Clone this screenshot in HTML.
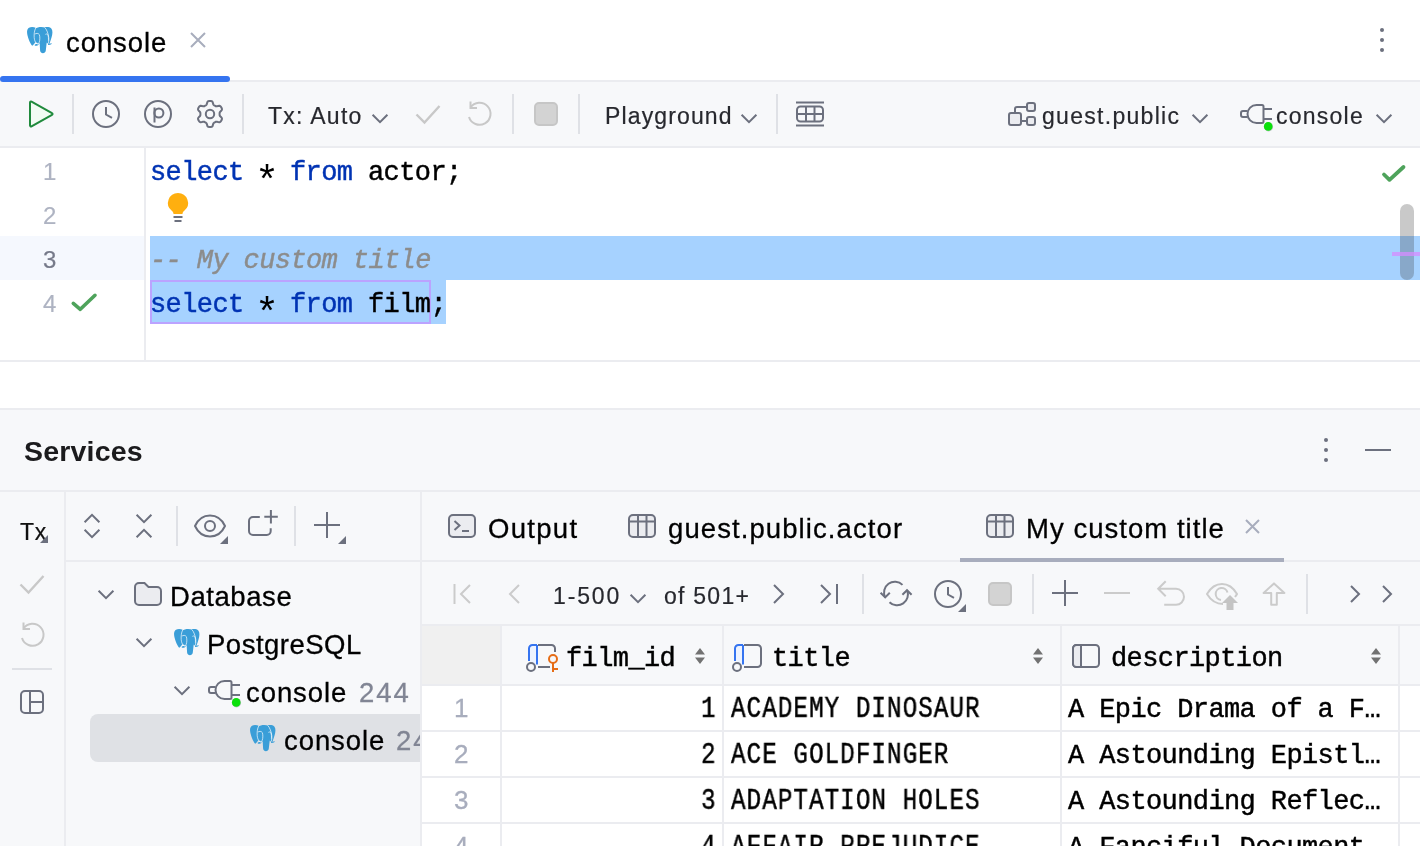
<!DOCTYPE html>
<html><head><meta charset="utf-8"><title>console</title>
<style>
html,body{margin:0;padding:0}
body{width:1420px;height:846px;position:relative;overflow:hidden;background:#fff;font-family:"Liberation Sans",sans-serif}
.r{position:absolute;display:block}
.t{position:absolute;white-space:pre;will-change:transform}
svg{overflow:visible}
</style></head><body>
<div class="r" style="left:0px;top:80px;width:1420px;height:2px;background:#ebecf0;"></div>
<div class="r" style="left:0px;top:82px;width:1420px;height:64px;background:#f7f8fa;"></div>
<div class="r" style="left:0px;top:146px;width:1420px;height:2px;background:#ebecf0;"></div>
<div class="r" style="left:0px;top:76px;width:230px;height:6px;background:#3574f0;border-radius:3px"></div>
<div class="r" style="left:0px;top:236px;width:144px;height:44px;background:#f5f8fe;"></div>
<div class="r" style="left:144px;top:148px;width:2px;height:212px;background:#ebecf0;"></div>
<div class="r" style="left:150px;top:236px;width:1270px;height:44px;background:#a6d2ff;"></div>
<div class="r" style="left:150px;top:280px;width:296px;height:44px;background:#a6d2ff;"></div>
<div class="r" style="left:150px;top:280px;width:281px;height:44px;background:transparent;box-sizing:border-box;border:2px solid #bba3ff"></div>
<div class="r" style="left:0px;top:360px;width:1420px;height:2px;background:#ebecf0;"></div>
<div class="r" style="left:0px;top:408px;width:1420px;height:2px;background:#ebecf0;"></div>
<div class="r" style="left:0px;top:410px;width:1420px;height:436px;background:#f7f8fa;"></div>
<div class="r" style="left:0px;top:490px;width:1420px;height:2px;background:#ebecf0;"></div>
<div class="r" style="left:64px;top:492px;width:2px;height:354px;background:#ebecf0;"></div>
<div class="r" style="left:66px;top:560px;width:1354px;height:2px;background:#ebecf0;"></div>
<div class="r" style="left:420px;top:492px;width:2px;height:354px;background:#ebecf0;"></div>
<svg class="r" style="left:27px;top:27px;" width="26" height="27" viewBox="0 0 26 27" fill="none"><g><path d="M2 .8C.6 1.600-.2 3.600.1 6c.5 4.200 2.600 9.800 5 12.800 1.200-.6 2.400-2 3.200-3.800L9 1C6.800-.1 3.800-.2 2 .800Z" fill="#3a9ed8"/>
<path d="M8.200 1.500C10.500-.3 15.500-.5 18 .500c1.500 1.500 2.200 5.500 2.200 9.500 0 2.500-.2 4.700-.6 6.500-.3 2.300-.5 4.700-.8 7-.4 3.600-5.300 3.700-5.700 0-.2-2.300-.2-4.800-.4-7l-5-1.200C6.800 11 6.800 5 8.200 1.500Z" fill="#3a9ed8"/>
<path d="M17.500.3C19.500-.4 22.800-.3 24.300 1.500c1.700 2 1.300 5.500.2 9-.6 2-1.200 4-2 6l-3-.5Z" fill="#3a9ed8"/>
<path d="M7.800 17.600l3.900-1.400.3 1.200c-1 1.100-2.500 1.600-4.200 1.400ZM20.800 16.200c1.300.5 2.800.5 4.200.1-.6 1.100-1.800 1.800-3.800 1.600Z" fill="#3a9ed8"/>
<path d="M8.800.9C7.300 3.500 7 7 7.200 10.500c.2 2.500.9 4.700 2.400 6 .7.600 1.500.8 2.300.7M7.800 7.200c1.200-1.100 3.600-1.200 4.500.4.700 1.600.7 5.500 0 7.500-.2.700-.6 1.200-1 1.600M17.600.3c2.300 2.300 3.700 6.500 4.200 10.500.2 2 0 3.800-.5 5.300M18.400 7.400c.9-.7 2-.5 2.500.4.500 1.500.7 4 .5 6" stroke="#fff" stroke-width=".8" stroke-opacity=".85" fill="none"/></g></svg>
<div class="t" style="left:66.20px;top:27.00px;font:400 27.5px/32px 'Liberation Sans';color:#000;letter-spacing:0.917px;-webkit-text-stroke:0.3px currentColor;">console</div>
<svg class="r" style="left:190px;top:32px;" width="16" height="16" viewBox="0 0 16 16" fill="none"><path d="M1 1l14 14M15 1L1 15" stroke="#a8adbd" stroke-width="2"/></svg>
<svg class="r" style="left:1378px;top:26px;" width="8" height="28" viewBox="0 0 8 28" fill="none"><circle cx="4" cy="4" r="2" fill="#6c707e"/><circle cx="4" cy="14" r="2" fill="#6c707e"/><circle cx="4" cy="24" r="2" fill="#6c707e"/></svg>
<svg class="r" style="left:28px;top:100px;" width="26" height="28" viewBox="0 0 26 28" fill="none"><path d="M2 2.600v22.800a1 1 0 0 0 1.500.900l20.500-11.400a1 1 0 0 0 0-1.800L3.500 1.700a1 1 0 0 0-1.500.900Z" fill="#f2fcf3" stroke="#208a3c" stroke-width="2" stroke-linejoin="round"/></svg>
<div class="r" style="left:72px;top:94px;width:2px;height:40px;background:#dfe1e6;"></div>
<div class="r" style="left:242px;top:94px;width:2px;height:40px;background:#dfe1e6;"></div>
<div class="r" style="left:512px;top:94px;width:2px;height:40px;background:#dfe1e6;"></div>
<div class="r" style="left:578px;top:94px;width:2px;height:40px;background:#dfe1e6;"></div>
<div class="r" style="left:776px;top:94px;width:2px;height:40px;background:#dfe1e6;"></div>
<svg class="r" style="left:92px;top:100px;" width="28" height="28" viewBox="0 0 28 28" fill="none"><circle cx="14" cy="14" r="13" stroke="#6c707e" stroke-width="2"/><path d="M14 7v7.500l6 3.400" stroke="#6c707e" stroke-width="2"/></svg>
<svg class="r" style="left:144px;top:100px;" width="28" height="28" viewBox="0 0 28 28" fill="none"><circle cx="14" cy="14" r="13" stroke="#6c707e" stroke-width="2"/><path d="M10.500 22.500v-15" stroke="#6c707e" stroke-width="2"/><circle cx="14.900" cy="13" r="4.500" stroke="#6c707e" stroke-width="2"/></svg>
<svg class="r" style="left:196px;top:100px;" width="28" height="28" viewBox="0 0 28 28" fill="none"><path d="M23.60 14.00L23.60 14.63L23.65 15.27L23.98 15.99L24.96 16.94L25.86 18.02L25.98 18.96L25.73 19.78L25.34 20.55L24.87 21.27L24.28 21.89L23.41 22.25L22.03 22.03L20.71 21.65L19.93 21.73L19.35 22.00L18.80 22.31L18.26 22.63L17.73 23.00L17.27 23.64L16.94 24.96L16.44 26.28L15.69 26.85L14.86 27.05L14.00 27.10L13.14 27.05L12.31 26.85L11.56 26.28L11.06 24.96L10.73 23.64L10.27 23.00L9.74 22.63L9.20 22.31L8.65 22.00L8.07 21.73L7.29 21.65L5.97 22.03L4.59 22.25L3.72 21.89L3.13 21.27L2.66 20.55L2.27 19.78L2.02 18.96L2.14 18.02L3.04 16.94L4.02 15.99L4.35 15.27L4.40 14.63L4.40 14.00L4.40 13.37L4.35 12.73L4.02 12.01L3.04 11.06L2.14 9.98L2.02 9.04L2.27 8.22L2.66 7.45L3.13 6.73L3.72 6.11L4.59 5.75L5.97 5.97L7.29 6.35L8.07 6.27L8.65 6.00L9.20 5.69L9.74 5.37L10.27 5.00L10.73 4.36L11.06 3.04L11.56 1.72L12.31 1.15L13.14 0.95L14.00 0.90L14.86 0.95L15.69 1.15L16.44 1.72L16.94 3.04L17.27 4.36L17.73 5.00L18.26 5.37L18.80 5.69L19.35 6.00L19.93 6.27L20.71 6.35L22.03 5.97L23.41 5.75L24.28 6.11L24.87 6.73L25.34 7.45L25.73 8.22L25.98 9.04L25.86 9.98L24.96 11.06L23.98 12.01L23.65 12.73L23.60 13.37Z" stroke="#6c707e" stroke-width="2" stroke-linejoin="round"/><circle cx="14" cy="14" r="4.200" stroke="#6c707e" stroke-width="2"/></svg>
<div class="t" style="left:268.20px;top:100.00px;font:400 23px/32px 'Liberation Sans';color:#27282e;letter-spacing:1.286px;-webkit-text-stroke:0.2px currentColor;">Tx: Auto</div>
<svg class="r" style="left:372px;top:113.5px;" width="16" height="9" viewBox="0 0 16 9" fill="none"><path d="M.600 .800L8 8.200 15.400 .800" stroke="#6c707e" stroke-width="2"/></svg>
<svg class="r" style="left:415px;top:104px;" width="26" height="20" viewBox="0 0 26 20" fill="none"><path d="M1.500 10.500l8 8L24.500 2" stroke="#c8c8c8" stroke-width="2.400"/></svg>
<svg class="r" style="left:467px;top:101px;" width="26" height="26" viewBox="0 0 26 26" fill="none"><path d="M3.500 6.500A11 11 0 1 1 2 16" stroke="#c8c8c8" stroke-width="2"/><path d="M3.500 0.500v6.500h6.500" stroke="#c8c8c8" stroke-width="2"/></svg>
<div class="r" style="left:534px;top:102px;width:24px;height:24px;background:#d3d3d3;box-sizing:border-box;border:2px solid #c6c6c6;border-radius:5px"></div>
<div class="t" style="left:605.00px;top:100.00px;font:400 23px/32px 'Liberation Sans';color:#27282e;letter-spacing:1.133px;-webkit-text-stroke:0.2px currentColor;">Playground</div>
<svg class="r" style="left:740.5px;top:113.5px;" width="16" height="9" viewBox="0 0 16 9" fill="none"><path d="M.600 .800L8 8.200 15.400 .800" stroke="#6c707e" stroke-width="2"/></svg>
<svg class="r" style="left:796px;top:101px;" width="28" height="26" viewBox="0 0 28 26" fill="none"><path d="M0 1.500h28M0 24.500h28" stroke="#6c707e" stroke-width="2"/><rect x="1" y="5.500" width="26" height="15" rx="3.500" stroke="#6c707e" stroke-width="2"/><path d="M1 13h26M10 5.500v15M18.500 5.500v15" stroke="#6c707e" stroke-width="2"/></svg>
<svg class="r" style="left:1008px;top:102px;" width="28" height="24" viewBox="0 0 28 24" fill="none"><rect x="1" y="11" width="12" height="12" rx="2" fill="#ebecf0" stroke="#6c707e" stroke-width="2"/><rect x="19" y="1" width="8" height="8" rx="2" fill="#ebecf0" stroke="#6c707e" stroke-width="2"/><rect x="19" y="15" width="8" height="8" rx="2" fill="#ebecf0" stroke="#6c707e" stroke-width="2"/><path d="M13 19h6M7 11V7a2 2 0 0 1 2-2h10" stroke="#6c707e" stroke-width="2"/></svg>
<div class="t" style="left:1042.20px;top:100.00px;font:400 23px/32px 'Liberation Sans';color:#27282e;letter-spacing:1.291px;-webkit-text-stroke:0.2px currentColor;">guest.public</div>
<svg class="r" style="left:1192px;top:113.5px;" width="16" height="9" viewBox="0 0 16 9" fill="none"><path d="M.600 .800L8 8.200 15.400 .800" stroke="#6c707e" stroke-width="2"/></svg>
<svg class="r" style="left:1240px;top:104px;" width="34" height="28" viewBox="0 0 34 28" fill="none"><path d="M7.500 7H3a2 2 0 0 0-2 2v2a2 2 0 0 0 2 2h4.500M23.500 5H32M23.500 15H32" stroke="#6c707e" stroke-width="2"/><path d="M7.500 10c0-5 4-9 9-9H22a1.500 1.500 0 0 1 1.500 1.500v15A1.500 1.500 0 0 1 22 19h-5.500c-5 0-9-4-9-9Z" stroke="#6c707e" stroke-width="2"/><circle cx="28.500" cy="22.800" r="4.600" fill="#6c707e" opacity=".4"/><circle cx="28.200" cy="22.400" r="4.300" fill="#0be00b"/></svg>
<div class="t" style="left:1276.20px;top:100.00px;font:400 23px/32px 'Liberation Sans';color:#27282e;letter-spacing:1.250px;-webkit-text-stroke:0.2px currentColor;">console</div>
<svg class="r" style="left:1376px;top:113.5px;" width="16" height="9" viewBox="0 0 16 9" fill="none"><path d="M.600 .800L8 8.200 15.400 .800" stroke="#6c707e" stroke-width="2"/></svg>
<div class="t" style="left:42.80px;top:156.00px;font:400 24px/32px 'Liberation Sans';color:#aeb3c2;-webkit-text-stroke:0.2px currentColor;">1</div>
<div class="t" style="left:42.80px;top:200.00px;font:400 24px/32px 'Liberation Sans';color:#aeb3c2;-webkit-text-stroke:0.2px currentColor;">2</div>
<div class="t" style="left:42.80px;top:244.00px;font:400 24px/32px 'Liberation Sans';color:#767a8a;-webkit-text-stroke:0.2px currentColor;">3</div>
<div class="t" style="left:42.80px;top:288.00px;font:400 24px/32px 'Liberation Sans';color:#aeb3c2;-webkit-text-stroke:0.2px currentColor;">4</div>
<div class="t" style="left:149.70px;top:156.80px;font:400 27px/32px 'Liberation Mono';color:#0033b3;letter-spacing:-0.603px;-webkit-text-stroke:0.45px currentColor;">select</div>
<div class="t" style="left:255.00px;top:169.50px;font:400 40px/27px 'Liberation Mono';color:#000;letter-spacing:-0.603px;">*</div>
<div class="t" style="left:290.10px;top:156.80px;font:400 27px/32px 'Liberation Mono';color:#0033b3;letter-spacing:-0.603px;-webkit-text-stroke:0.45px currentColor;">from</div>
<div class="t" style="left:368.10px;top:156.80px;font:400 27px/32px 'Liberation Mono';color:#000;letter-spacing:-0.603px;-webkit-text-stroke:0.45px currentColor;">actor;</div>
<div class="t" style="left:149.70px;top:244.80px;font:italic 400 27px/32px 'Liberation Mono';color:#8c8c8c;letter-spacing:-0.603px;-webkit-text-stroke:0.45px currentColor;">-- My custom title</div>
<div class="t" style="left:149.70px;top:288.80px;font:400 27px/32px 'Liberation Mono';color:#0033b3;letter-spacing:-0.603px;-webkit-text-stroke:0.45px currentColor;">select</div>
<div class="t" style="left:255.00px;top:301.50px;font:400 40px/27px 'Liberation Mono';color:#000;letter-spacing:-0.603px;">*</div>
<div class="t" style="left:290.10px;top:288.80px;font:400 27px/32px 'Liberation Mono';color:#0033b3;letter-spacing:-0.603px;-webkit-text-stroke:0.45px currentColor;">from</div>
<div class="t" style="left:368.10px;top:288.80px;font:400 27px/32px 'Liberation Mono';color:#000;letter-spacing:-0.603px;-webkit-text-stroke:0.45px currentColor;">film;</div>
<svg class="r" style="left:70px;top:292px;" width="28" height="20" viewBox="0 0 28 20" fill="none"><path d="M3.300 11.300l7 6L25 3.300" stroke="#4ea35b" stroke-width="3.600" stroke-linecap="round" stroke-linejoin="round"/></svg>
<svg class="r" style="left:1380px;top:163px;" width="26" height="20" viewBox="0 0 26 20" fill="none"><path d="M4 11.500l5.500 5.300L23.500 4" stroke="#4ea35b" stroke-width="3.800" stroke-linecap="round" stroke-linejoin="round"/></svg>
<svg class="r" style="left:168px;top:193px;" width="20" height="30" viewBox="0 0 20 30" fill="none"><path d="M10 0a10 10 0 0 1 6.500 17.600c-1.300 1.100-2 2.200-2 3.400h-9c0-1.200-.700-2.300-2-3.400A10 10 0 0 1 10 0Z" fill="#ffaf0f"/><path d="M5.500 24h9M6.500 28h7" stroke="#6c707e" stroke-width="2"/></svg>
<div class="r" style="left:1400px;top:204px;width:14px;height:76px;background:rgba(60,60,60,.28);border-radius:7px"></div>
<div class="r" style="left:1392px;top:252px;width:28px;height:4px;background:rgba(214,140,255,.75);"></div>
<div class="t" style="left:24.20px;top:435.30px;font:700 28.5px/32px 'Liberation Sans';color:#1b1b1d;letter-spacing:0.186px;">Services</div>
<svg class="r" style="left:1322px;top:436px;" width="8" height="28" viewBox="0 0 8 28" fill="none"><circle cx="4" cy="4" r="2" fill="#6c707e"/><circle cx="4" cy="14" r="2" fill="#6c707e"/><circle cx="4" cy="24" r="2" fill="#6c707e"/></svg>
<div class="r" style="left:1365px;top:449px;width:26px;height:2px;background:#6c707e;"></div>
<div class="t" style="left:19.50px;top:515.50px;font:400 23px/32px 'Liberation Sans';color:#111;letter-spacing:0.700px;-webkit-text-stroke:0.2px currentColor;">Tx</div>
<svg class="r" style="left:40px;top:535px;" width="8" height="8" viewBox="0 0 8 8" fill="none"><path d="M8 0v8H0Z" fill="#6c707e"/></svg>
<svg class="r" style="left:19px;top:574px;" width="26" height="20" viewBox="0 0 26 20" fill="none"><path d="M1.500 10.500l8 8L24.500 2" stroke="#c8c8c8" stroke-width="2.400"/></svg>
<svg class="r" style="left:20px;top:622px;" width="26" height="26" viewBox="0 0 26 26" fill="none"><path d="M3.500 6.500A11 11 0 1 1 2 16" stroke="#c8c8c8" stroke-width="2"/><path d="M3.500 0.500v6.500h6.500" stroke="#c8c8c8" stroke-width="2"/></svg>
<div class="r" style="left:12px;top:668px;width:40px;height:2px;background:#dfe1e6;"></div>
<svg class="r" style="left:20px;top:690px;" width="24" height="24" viewBox="0 0 24 24" fill="none"><rect x="1" y="1" width="22" height="22" rx="4" stroke="#6c707e" stroke-width="2"/><path d="M10 1v22M10 12h13" stroke="#6c707e" stroke-width="2"/></svg>
<svg class="r" style="left:84px;top:514px;" width="16" height="24" viewBox="0 0 16 24" fill="none"><path d="M.600 8.200L8 .800l7.400 7.400M.600 15.800L8 23.200l7.400-7.400" stroke="#6c707e" stroke-width="2"/></svg>
<svg class="r" style="left:136px;top:514px;" width="16" height="24" viewBox="0 0 16 24" fill="none"><path d="M.600 .800L8 8.200 15.400 .800M.600 23.200L8 15.800l7.400 7.400" stroke="#6c707e" stroke-width="2"/></svg>
<div class="r" style="left:176px;top:506px;width:2px;height:40px;background:#dfe1e6;"></div>
<div class="r" style="left:294px;top:506px;width:2px;height:40px;background:#dfe1e6;"></div>
<svg class="r" style="left:194px;top:514px;" width="34" height="30" viewBox="0 0 34 30" fill="none"><path d="M1 12C4 5.500 9.500 1.500 16 1.500S28 5.500 31 12c-3 6.500-8.500 10.500-15 10.500S4 18.500 1 12Z" stroke="#6c707e" stroke-width="2" stroke-linejoin="round"/><circle cx="16" cy="12" r="5" stroke="#6c707e" stroke-width="2"/><path d="M34 22v8h-8Z" fill="#6c707e"/></svg>
<svg class="r" style="left:248px;top:510px;" width="30" height="27" viewBox="0 0 30 27" fill="none"><path d="M11.800 7H5a4 4 0 0 0-4 4v10a4 4 0 0 0 4 4h13.700a4 4 0 0 0 4-4v-2.700" stroke="#6c707e" stroke-width="2"/><path d="M22.900 0v13.400M16.300 6.800h13.500" stroke="#6c707e" stroke-width="2"/></svg>
<svg class="r" style="left:314px;top:512px;" width="32" height="32" viewBox="0 0 32 32" fill="none"><path d="M13 0v26M0 13h26" stroke="#6c707e" stroke-width="2"/><path d="M32 24v8h-8Z" fill="#6c707e"/></svg>
<svg class="r" style="left:98px;top:589.5px;" width="16" height="9" viewBox="0 0 16 9" fill="none"><path d="M.600 .800L8 8.200 15.400 .800" stroke="#6c707e" stroke-width="2"/></svg>
<svg class="r" style="left:134px;top:582px;" width="28" height="24" viewBox="0 0 28 24" fill="none"><path d="M1 5a4 4 0 0 1 4-4h5.500l4 4H23a4 4 0 0 1 4 4v10a4 4 0 0 1-4 4H5a4 4 0 0 1-4-4Z" fill="#ebecf0" stroke="#6c707e" stroke-width="2"/></svg>
<div class="t" style="left:169.50px;top:580.50px;font:400 27.5px/32px 'Liberation Sans';color:#000;letter-spacing:0.571px;-webkit-text-stroke:0.3px currentColor;">Database</div>
<svg class="r" style="left:136px;top:637.5px;" width="16" height="9" viewBox="0 0 16 9" fill="none"><path d="M.600 .800L8 8.200 15.400 .800" stroke="#6c707e" stroke-width="2"/></svg>
<svg class="r" style="left:173.5px;top:628.5px;" width="26" height="27" viewBox="0 0 26 27" fill="none"><g><path d="M2 .8C.6 1.600-.2 3.600.1 6c.5 4.200 2.600 9.800 5 12.800 1.200-.6 2.400-2 3.200-3.800L9 1C6.800-.1 3.800-.2 2 .800Z" fill="#3a9ed8"/>
<path d="M8.200 1.500C10.500-.3 15.500-.5 18 .500c1.500 1.500 2.200 5.500 2.200 9.500 0 2.500-.2 4.700-.6 6.500-.3 2.300-.5 4.700-.8 7-.4 3.600-5.300 3.700-5.700 0-.2-2.300-.2-4.800-.4-7l-5-1.200C6.800 11 6.800 5 8.200 1.500Z" fill="#3a9ed8"/>
<path d="M17.500.3C19.500-.4 22.800-.3 24.300 1.500c1.700 2 1.300 5.500.2 9-.6 2-1.200 4-2 6l-3-.5Z" fill="#3a9ed8"/>
<path d="M7.800 17.600l3.900-1.400.3 1.200c-1 1.100-2.500 1.600-4.200 1.400ZM20.800 16.200c1.300.5 2.800.5 4.200.1-.6 1.100-1.800 1.800-3.800 1.600Z" fill="#3a9ed8"/>
<path d="M8.800.9C7.300 3.500 7 7 7.200 10.500c.2 2.500.9 4.700 2.400 6 .7.600 1.500.8 2.300.7M7.800 7.200c1.200-1.100 3.600-1.200 4.500.4.700 1.600.7 5.500 0 7.500-.2.700-.6 1.200-1 1.600M17.600.3c2.300 2.300 3.700 6.500 4.200 10.500.2 2 0 3.800-.5 5.300M18.400 7.400c.9-.7 2-.5 2.500.4.500 1.500.7 4 .5 6" stroke="#fff" stroke-width=".8" stroke-opacity=".85" fill="none"/></g></svg>
<div class="t" style="left:207.00px;top:628.50px;font:400 27.5px/32px 'Liberation Sans';color:#000;letter-spacing:0.500px;-webkit-text-stroke:0.3px currentColor;">PostgreSQL</div>
<svg class="r" style="left:174px;top:685.5px;" width="16" height="9" viewBox="0 0 16 9" fill="none"><path d="M.600 .800L8 8.200 15.400 .800" stroke="#6c707e" stroke-width="2"/></svg>
<svg class="r" style="left:208px;top:680px;" width="34" height="28" viewBox="0 0 34 28" fill="none"><path d="M7.500 7H3a2 2 0 0 0-2 2v2a2 2 0 0 0 2 2h4.500M23.500 5H32M23.500 15H32" stroke="#6c707e" stroke-width="2"/><path d="M7.500 10c0-5 4-9 9-9H22a1.500 1.500 0 0 1 1.500 1.500v15A1.500 1.500 0 0 1 22 19h-5.500c-5 0-9-4-9-9Z" stroke="#6c707e" stroke-width="2"/><circle cx="28.500" cy="22.800" r="4.600" fill="#6c707e" opacity=".4"/><circle cx="28.200" cy="22.400" r="4.300" fill="#0be00b"/></svg>
<div class="t" style="left:246.20px;top:676.50px;font:400 27.5px/32px 'Liberation Sans';color:#000;letter-spacing:0.917px;-webkit-text-stroke:0.3px currentColor;">console</div>
<div class="t" style="left:358.70px;top:676.50px;font:400 27.5px/32px 'Liberation Sans';color:#818594;letter-spacing:2.000px;-webkit-text-stroke:0.3px currentColor;">244</div>
<div class="r" style="left:90px;top:714px;width:330px;height:48px;background:#dfe1e5;border-radius:8px 0 0 8px"></div>
<svg class="r" style="left:249.5px;top:725px;" width="26" height="27" viewBox="0 0 26 27" fill="none"><g><path d="M2 .8C.6 1.600-.2 3.600.1 6c.5 4.200 2.600 9.800 5 12.800 1.200-.6 2.400-2 3.200-3.800L9 1C6.800-.1 3.800-.2 2 .800Z" fill="#3a9ed8"/>
<path d="M8.200 1.500C10.500-.3 15.500-.5 18 .500c1.500 1.500 2.200 5.500 2.200 9.500 0 2.500-.2 4.700-.6 6.500-.3 2.300-.5 4.700-.8 7-.4 3.600-5.300 3.700-5.700 0-.2-2.300-.2-4.800-.4-7l-5-1.200C6.800 11 6.800 5 8.200 1.500Z" fill="#3a9ed8"/>
<path d="M17.500.3C19.500-.4 22.800-.3 24.300 1.500c1.700 2 1.300 5.500.2 9-.6 2-1.200 4-2 6l-3-.5Z" fill="#3a9ed8"/>
<path d="M7.800 17.600l3.900-1.400.3 1.200c-1 1.100-2.500 1.600-4.200 1.400ZM20.800 16.200c1.300.5 2.800.5 4.200.1-.6 1.100-1.800 1.800-3.800 1.600Z" fill="#3a9ed8"/>
<path d="M8.800.9C7.300 3.500 7 7 7.200 10.500c.2 2.500.9 4.700 2.400 6 .7.600 1.500.8 2.300.7M7.800 7.200c1.200-1.100 3.600-1.200 4.500.4.700 1.600.7 5.500 0 7.500-.2.700-.6 1.200-1 1.600M17.600.3c2.300 2.300 3.700 6.500 4.200 10.500.2 2 0 3.800-.5 5.300M18.400 7.400c.9-.7 2-.5 2.500.4.500 1.500.7 4 .5 6" stroke="#fff" stroke-width=".8" stroke-opacity=".85" fill="none"/></g></svg>
<div class="t" style="left:284.20px;top:724.50px;font:400 27.5px/32px 'Liberation Sans';color:#000;letter-spacing:0.917px;-webkit-text-stroke:0.3px currentColor;">console</div>
<div class="r" style="left:390px;top:714px;width:30px;height:48px;overflow:hidden">
<div class="t" style="left:6.20px;top:10.50px;font:400 27.5px/32px 'Liberation Sans';color:#818594;letter-spacing:2.000px;-webkit-text-stroke:0.3px currentColor;">244</div>
</div>
<svg class="r" style="left:448px;top:514px;" width="28" height="24" viewBox="0 0 28 24" fill="none"><rect x="1" y="1" width="26" height="22" rx="4" fill="#ebecf0" stroke="#6c707e" stroke-width="2"/><path d="M6.500 7l5 4.500-5 4.500M14 17h7" stroke="#6c707e" stroke-width="2"/></svg>
<div class="t" style="left:488.20px;top:513.00px;font:400 27.5px/32px 'Liberation Sans';color:#000;letter-spacing:1.300px;-webkit-text-stroke:0.3px currentColor;">Output</div>
<svg class="r" style="left:628px;top:514px;" width="28" height="24" viewBox="0 0 28 24" fill="none"><rect x="1" y="1" width="26" height="22" rx="4" fill="#ebecf0" stroke="#6c707e" stroke-width="2"/><path d="M1 7.500h26M10 1v22M18.500 1v22" stroke="#6c707e" stroke-width="2"/></svg>
<div class="t" style="left:668.20px;top:513.00px;font:400 27.5px/32px 'Liberation Sans';color:#000;letter-spacing:1.088px;-webkit-text-stroke:0.3px currentColor;">guest.public.actor</div>
<svg class="r" style="left:986px;top:514px;" width="28" height="24" viewBox="0 0 28 24" fill="none"><rect x="1" y="1" width="26" height="22" rx="4" fill="#ebecf0" stroke="#6c707e" stroke-width="2"/><path d="M1 7.500h26M10 1v22M18.500 1v22" stroke="#6c707e" stroke-width="2"/></svg>
<div class="t" style="left:1026.00px;top:513.00px;font:400 27.5px/32px 'Liberation Sans';color:#000;letter-spacing:1.036px;-webkit-text-stroke:0.3px currentColor;">My custom title</div>
<svg class="r" style="left:1244.5px;top:518.5px;" width="15" height="15" viewBox="0 0 15 15" fill="none"><path d="M1 1l13 13M14 1L1 14" stroke="#a8adbd" stroke-width="2"/></svg>
<div class="r" style="left:960px;top:558px;width:324px;height:4px;background:#a8adbd;"></div>
<svg class="r" style="left:453px;top:584px;" width="18" height="20" viewBox="0 0 18 20" fill="none"><path d="M1.500 0v20M17 1L8 10l9 9" stroke="#cbcbcb" stroke-width="2"/></svg>
<svg class="r" style="left:507px;top:584px;" width="14" height="20" viewBox="0 0 14 20" fill="none"><path d="M12 1L3 10l9 9" stroke="#cbcbcb" stroke-width="2"/></svg>
<div class="t" style="left:553.20px;top:579.50px;font:400 23px/32px 'Liberation Sans';color:#27282e;letter-spacing:1.875px;-webkit-text-stroke:0.2px currentColor;">1-500</div>
<svg class="r" style="left:630px;top:594px;" width="16" height="9" viewBox="0 0 16 9" fill="none"><path d="M.600 .800L8 8.200 15.400 .800" stroke="#6c707e" stroke-width="2"/></svg>
<div class="t" style="left:664.20px;top:579.50px;font:400 23px/32px 'Liberation Sans';color:#27282e;letter-spacing:1.250px;-webkit-text-stroke:0.2px currentColor;">of 501+</div>
<svg class="r" style="left:772px;top:584px;" width="14" height="20" viewBox="0 0 14 20" fill="none"><path d="M2 1l9 9-9 9" stroke="#6c707e" stroke-width="2"/></svg>
<svg class="r" style="left:820px;top:584px;" width="19" height="20" viewBox="0 0 19 20" fill="none"><path d="M1 1l9 9-9 9M17 0v20" stroke="#6c707e" stroke-width="2"/></svg>
<div class="r" style="left:862px;top:574px;width:2px;height:40px;background:#dfe1e6;"></div>
<div class="r" style="left:1032px;top:574px;width:2px;height:40px;background:#dfe1e6;"></div>
<div class="r" style="left:1306px;top:574px;width:2px;height:40px;background:#dfe1e6;"></div>
<svg class="r" style="left:880px;top:581px;" width="32" height="26" viewBox="0 0 32 26" fill="none"><path d="M5.200 16.400A10.800 10.800 0 0 1 22.500 3.900M27 9.200A10.800 10.800 0 0 1 9.500 21.200" stroke="#6c707e" stroke-width="2"/><path d="M.600 11.800l4.600 4.600 4.600-4.600M22.400 13.800L27 9.200l4.600 4.600" stroke="#6c707e" stroke-width="2"/></svg>
<svg class="r" style="left:934px;top:580px;" width="32" height="32" viewBox="0 0 32 32" fill="none"><circle cx="14" cy="14" r="13" stroke="#6c707e" stroke-width="2"/><path d="M14 7v7.500l6 3.400" stroke="#6c707e" stroke-width="2"/><path d="M32 24v8h-8Z" fill="#6c707e"/></svg>
<div class="r" style="left:988px;top:582px;width:24px;height:24px;background:#d3d3d3;box-sizing:border-box;border:2px solid #c6c6c6;border-radius:5px"></div>
<svg class="r" style="left:1052px;top:580px;" width="26" height="26" viewBox="0 0 26 26" fill="none"><path d="M13 0v26M0 13h26" stroke="#6c707e" stroke-width="2"/></svg>
<div class="r" style="left:1104px;top:592px;width:26px;height:2px;background:#cbcbcb;"></div>
<svg class="r" style="left:1157px;top:580px;" width="28" height="26" viewBox="0 0 28 26" fill="none"><path d="M8.700 1.300L1.200 8.800l7.500 7.500M1.700 8.800H19a8 8 0 0 1 0 16H7.200" stroke="#cbcbcb" stroke-width="2"/></svg>
<svg class="r" style="left:1206px;top:583px;" width="32" height="27" viewBox="0 0 32 27" fill="none"><path d="M17 21C9 21 4 16 1 11 4.500 5 9.500 1 16 1s11.500 4 15 10c-.5 1-1.200 2-2 3" stroke="#cbcbcb" stroke-width="2"/><path d="M21.500 9.500A6 6 0 1 0 15 17" stroke="#cbcbcb" stroke-width="2"/><path d="M24 12l8 8h-4.500v7h-7v-7H16Z" fill="#c4c4c4"/></svg>
<svg class="r" style="left:1262px;top:582px;" width="24" height="24" viewBox="0 0 24 24" fill="none"><path d="M12 1.400L1.600 11h7.600v11.800h5.600V11h7.600Z" stroke="#cbcbcb" stroke-width="2" stroke-linejoin="round"/></svg>
<svg class="r" style="left:1349px;top:586px;" width="12" height="16" viewBox="0 0 12 16" fill="none"><path d="M2 0l8 8-8 8" stroke="#6c707e" stroke-width="2"/></svg>
<svg class="r" style="left:1381px;top:586px;" width="12" height="16" viewBox="0 0 12 16" fill="none"><path d="M2 0l8 8-8 8" stroke="#6c707e" stroke-width="2"/></svg>
<div class="r" style="left:422px;top:624px;width:998px;height:222px;background:#fff;"></div>
<div class="r" style="left:422px;top:624px;width:998px;height:2px;background:#ebecf0;"></div>
<div class="r" style="left:422px;top:626px;width:79px;height:58px;background:#f0f0f0;"></div>
<div class="r" style="left:502px;top:626px;width:918px;height:58px;background:#f7f8fa;"></div>
<div class="r" style="left:422px;top:684px;width:998px;height:2px;background:#ebecf0;"></div>
<div class="r" style="left:422px;top:730px;width:998px;height:2px;background:#ebecf0;"></div>
<div class="r" style="left:422px;top:776px;width:998px;height:2px;background:#ebecf0;"></div>
<div class="r" style="left:422px;top:822px;width:998px;height:2px;background:#ebecf0;"></div>
<div class="r" style="left:500px;top:626px;width:2px;height:220px;background:#ebecf0;"></div>
<div class="r" style="left:722px;top:626px;width:2px;height:220px;background:#ebecf0;"></div>
<div class="r" style="left:1060px;top:626px;width:2px;height:220px;background:#ebecf0;"></div>
<div class="r" style="left:1398px;top:626px;width:2px;height:220px;background:#ebecf0;"></div>
<svg class="r" style="left:526px;top:644px;" width="34" height="29" viewBox="0 0 34 29" fill="none"><path d="M4 17V4.500A2.500 2.500 0 0 1 6.500 2H10v19Z" fill="#edf3ff"/><path d="M11 1v19.500" stroke="#3574f0" stroke-width="2"/><path d="M11 1H6.500A3.500 3.500 0 0 0 3 4.500V17" stroke="#3574f0" stroke-width="2"/><path d="M12 1h13.500A3.500 3.500 0 0 1 29 4.500V8M12 23h12" stroke="#6c707e" stroke-width="2"/><circle cx="27" cy="15" r="4" stroke="#e66d17" stroke-width="2"/><path d="M27 19v9M27 25h5" stroke="#e66d17" stroke-width="2"/><circle cx="5" cy="23" r="4" fill="#f7f8fa" stroke="#6c707e" stroke-width="2"/></svg>
<svg class="r" style="left:732px;top:644px;" width="34" height="29" viewBox="0 0 34 29" fill="none"><path d="M4 17V4.500A2.500 2.500 0 0 1 6.500 2H10v19Z" fill="#edf3ff"/><path d="M11 1v19.500" stroke="#3574f0" stroke-width="2"/><path d="M11 1H6.500A3.500 3.500 0 0 0 3 4.500V17" stroke="#3574f0" stroke-width="2"/><path d="M12 1h13.500A3.500 3.500 0 0 1 29 4.500v15A3.500 3.500 0 0 1 25.500 23H12" stroke="#6c707e" stroke-width="2"/><circle cx="5" cy="23" r="4" fill="#f7f8fa" stroke="#6c707e" stroke-width="2"/></svg>
<svg class="r" style="left:1072px;top:644px;" width="28" height="24" viewBox="0 0 28 24" fill="none"><rect x="1" y="1" width="26" height="22" rx="3.500" stroke="#6c707e" stroke-width="2"/><path d="M1 4.500A3.500 3.500 0 0 1 4.500 1H9v22H4.500A3.500 3.500 0 0 1 1 19.500Z" fill="#ebecf0" stroke="#6c707e" stroke-width="2"/></svg>
<svg class="r" style="left:695px;top:648px;" width="10" height="16" viewBox="0 0 10 16" fill="none"><path d="M5 0l5 6.500H0ZM5 16l5-6.500H0Z" fill="#727272"/></svg>
<svg class="r" style="left:1033px;top:648px;" width="10" height="16" viewBox="0 0 10 16" fill="none"><path d="M5 0l5 6.500H0ZM5 16l5-6.500H0Z" fill="#727272"/></svg>
<svg class="r" style="left:1371px;top:648px;" width="10" height="16" viewBox="0 0 10 16" fill="none"><path d="M5 0l5 6.500H0ZM5 16l5-6.500H0Z" fill="#727272"/></svg>
<div class="t" style="left:565.70px;top:643.00px;font:400 27px/32px 'Liberation Mono';color:#000;letter-spacing:-0.603px;-webkit-text-stroke:0.45px currentColor;">film_id</div>
<div class="t" style="left:771.70px;top:643.00px;font:400 27px/32px 'Liberation Mono';color:#000;letter-spacing:-0.603px;-webkit-text-stroke:0.45px currentColor;">title</div>
<div class="t" style="left:1110.70px;top:643.00px;font:400 27px/32px 'Liberation Mono';color:#000;letter-spacing:-0.603px;-webkit-text-stroke:0.45px currentColor;">description</div>
<div class="t" style="left:453.50px;top:692.40px;font:400 26px/32px 'Liberation Sans';color:#a8adbd;-webkit-text-stroke:0.3px currentColor;">1</div>
<div class="t" style="left:700.91px;top:694.00px;font:400 27px/32px 'Liberation Mono';color:#000;transform:scale(0.9,1.09);transform-origin:0 23px;letter-spacing:1.131px;-webkit-text-stroke:0.45px currentColor;">1</div>
<div class="t" style="left:730.51px;top:694.00px;font:400 27px/32px 'Liberation Mono';color:#000;transform:scale(0.9,1.09);transform-origin:0 23px;letter-spacing:1.131px;-webkit-text-stroke:0.45px currentColor;">ACADEMY DINOSAUR</div>
<div class="t" style="left:1067.70px;top:694.00px;font:400 27px/32px 'Liberation Mono';color:#000;letter-spacing:-0.603px;-webkit-text-stroke:0.45px currentColor;">A Epic Drama of a F…</div>
<div class="t" style="left:453.50px;top:738.40px;font:400 26px/32px 'Liberation Sans';color:#a8adbd;-webkit-text-stroke:0.3px currentColor;">2</div>
<div class="t" style="left:700.91px;top:740.00px;font:400 27px/32px 'Liberation Mono';color:#000;transform:scale(0.9,1.09);transform-origin:0 23px;letter-spacing:1.131px;-webkit-text-stroke:0.45px currentColor;">2</div>
<div class="t" style="left:730.51px;top:740.00px;font:400 27px/32px 'Liberation Mono';color:#000;transform:scale(0.9,1.09);transform-origin:0 23px;letter-spacing:1.131px;-webkit-text-stroke:0.45px currentColor;">ACE GOLDFINGER</div>
<div class="t" style="left:1067.70px;top:740.00px;font:400 27px/32px 'Liberation Mono';color:#000;letter-spacing:-0.603px;-webkit-text-stroke:0.45px currentColor;">A Astounding Epistl…</div>
<div class="t" style="left:453.50px;top:784.40px;font:400 26px/32px 'Liberation Sans';color:#a8adbd;-webkit-text-stroke:0.3px currentColor;">3</div>
<div class="t" style="left:700.91px;top:786.00px;font:400 27px/32px 'Liberation Mono';color:#000;transform:scale(0.9,1.09);transform-origin:0 23px;letter-spacing:1.131px;-webkit-text-stroke:0.45px currentColor;">3</div>
<div class="t" style="left:730.51px;top:786.00px;font:400 27px/32px 'Liberation Mono';color:#000;transform:scale(0.9,1.09);transform-origin:0 23px;letter-spacing:1.131px;-webkit-text-stroke:0.45px currentColor;">ADAPTATION HOLES</div>
<div class="t" style="left:1067.70px;top:786.00px;font:400 27px/32px 'Liberation Mono';color:#000;letter-spacing:-0.603px;-webkit-text-stroke:0.45px currentColor;">A Astounding Reflec…</div>
<div class="t" style="left:453.50px;top:830.40px;font:400 26px/32px 'Liberation Sans';color:#a8adbd;-webkit-text-stroke:0.3px currentColor;">4</div>
<div class="t" style="left:700.91px;top:832.00px;font:400 27px/32px 'Liberation Mono';color:#000;transform:scale(0.9,1.09);transform-origin:0 23px;letter-spacing:1.131px;-webkit-text-stroke:0.45px currentColor;">4</div>
<div class="t" style="left:730.51px;top:832.00px;font:400 27px/32px 'Liberation Mono';color:#000;transform:scale(0.9,1.09);transform-origin:0 23px;letter-spacing:1.131px;-webkit-text-stroke:0.45px currentColor;">AFFAIR PREJUDICE</div>
<div class="t" style="left:1067.70px;top:832.00px;font:400 27px/32px 'Liberation Mono';color:#000;letter-spacing:-0.603px;-webkit-text-stroke:0.45px currentColor;">A Fanciful Document…</div>
</body></html>
